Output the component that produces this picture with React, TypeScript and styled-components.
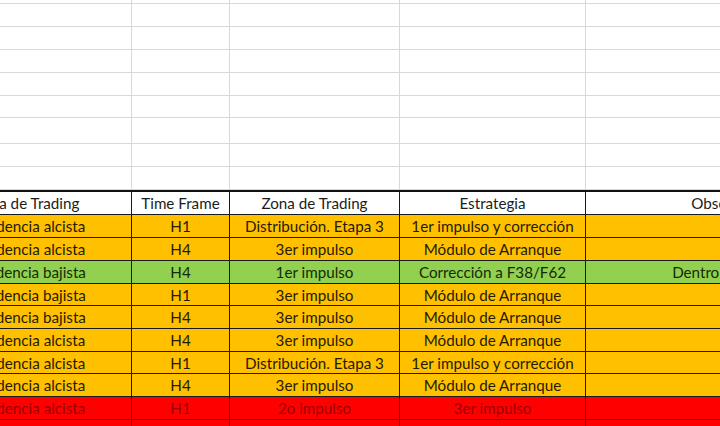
import React from "react";
import styled, { createGlobalStyle, css } from "styled-components";

const Global = createGlobalStyle`
  html, body { margin: 0; padding: 0; background: #ffffff; overflow: hidden; }
  body { width: 720px; height: 426px; }
`;

const COLS = "205px 98px 170px 186px 310px";

type Kind = "blank" | "header" | "orange" | "green" | "red";

const Sheet = styled.div`
  width: 1069px;
  margin-left: -73px;
  display: flex;
  flex-direction: column;
  font-family: Lato, "Liberation Sans", sans-serif;
  font-size: 15.2px;
`;

const Row = styled.div<{ $h: number; $kind: Kind }>`
  display: grid;
  grid-template-columns: ${COLS};
  height: ${(p) => p.$h}px;
  box-sizing: border-box;
  ${(p) =>
    p.$kind === "header" &&
    css`
      border-top: 2px solid #111;
    `}
`;

const fills: Record<Kind, string> = {
  blank: "#ffffff",
  header: "#ffffff",
  orange: "#ffc000",
  green: "#92d050",
  red: "#ff0000",
};

const inks: Record<Kind, string> = {
  blank: "#000",
  header: "#1c1c1c",
  orange: "#241b00",
  green: "#142a08",
  red: "#9c0000",
};

const Cell = styled.div<{ $kind: Kind }>`
  box-sizing: border-box;
  display: flex;
  align-items: center;
  justify-content: center;
  white-space: nowrap;
  overflow: hidden;
  background: ${(p) => fills[p.$kind]};
  color: ${(p) => inks[p.$kind]};
  border-right: 1px solid ${(p) => (p.$kind === "blank" ? "#d9d9d9" : "#1a1a1a")};
  border-bottom: 1px solid ${(p) => (p.$kind === "blank" ? "#d9d9d9" : "#1a1a1a")};
`;

const blankHeights = [4, 23, 23, 23, 23, 22, 26, 23, 23];

const data: { kind: Kind; h: number; cells: string[] }[] = [
  { kind: "orange", h: 23, cells: ["Tendencia alcista", "H1", "Distribución. Etapa 3", "1er impulso y corrección", ""] },
  { kind: "orange", h: 23, cells: ["Tendencia alcista", "H4", "3er impulso", "Módulo de Arranque", ""] },
  { kind: "green", h: 23, cells: ["Tendencia bajista", "H4", "1er impulso", "Corrección a F38/F62", "Dentro de tendencia"] },
  { kind: "orange", h: 22, cells: ["Tendencia bajista", "H1", "3er impulso", "Módulo de Arranque", ""] },
  { kind: "orange", h: 23, cells: ["Tendencia bajista", "H4", "3er impulso", "Módulo de Arranque", ""] },
  { kind: "orange", h: 23, cells: ["Tendencia alcista", "H4", "3er impulso", "Módulo de Arranque", ""] },
  { kind: "orange", h: 22, cells: ["Tendencia alcista", "H1", "Distribución. Etapa 3", "1er impulso y corrección", ""] },
  { kind: "orange", h: 23, cells: ["Tendencia alcista", "H4", "3er impulso", "Módulo de Arranque", ""] },
  { kind: "red", h: 23, cells: ["Tendencia alcista", "H1", "2o impulso", "3er impulso", ""] },
  { kind: "red", h: 23, cells: ["Tendencia alcista", "H4", "2o impulso", "3er impulso", ""] },
];

const header = ["Idea de Trading", "Time Frame", "Zona de Trading", "Estrategia", "Observaciones"];

export default function App() {
  return (
    <>
      <Global />
      <Sheet>
        {blankHeights.map((h, i) => (
          <Row key={"b" + i} $h={h} $kind="blank">
            {header.map((_, j) => (
              <Cell key={j} $kind="blank" />
            ))}
          </Row>
        ))}
        <Row $h={25} $kind="header">
          {header.map((t) => (
            <Cell key={t} $kind="header">
              {t}
            </Cell>
          ))}
        </Row>
        {data.map((r, i) => (
          <Row key={i} $h={r.h} $kind={r.kind}>
            {r.cells.map((t, j) => (
              <Cell key={j} $kind={r.kind}>
                {t}
              </Cell>
            ))}
          </Row>
        ))}
      </Sheet>
    </>
  );
}
